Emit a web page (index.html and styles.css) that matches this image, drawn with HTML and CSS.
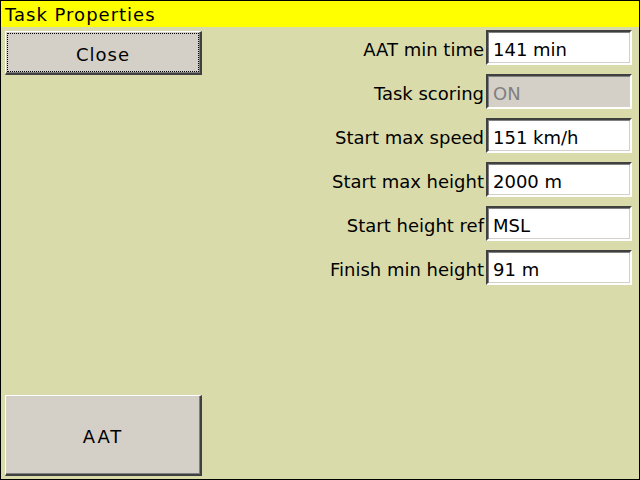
FILE: index.html
```html
<!DOCTYPE html>
<html>
<head>
<meta charset="utf-8">
<link rel="stylesheet" href="styles.css">
</head>
<body>
<div class="window">
  <div class="titlebar">Task Properties</div>
  <div class="content">
    <div class="buttons">
      <button class="btn btn-close"><span class="focus">Close</span></button>
      <button class="btn btn-aat">AAT</button>
    </div>
    <div class="form">
      <div class="row"><span class="label">AAT min time</span><span class="field">141 min</span></div>
      <div class="row"><span class="label">Task scoring</span><span class="field disabled">ON</span></div>
      <div class="row"><span class="label">Start max speed</span><span class="field">151 km/h</span></div>
      <div class="row"><span class="label">Start max height</span><span class="field">2000 m</span></div>
      <div class="row"><span class="label">Start height ref</span><span class="field">MSL</span></div>
      <div class="row"><span class="label">Finish min height</span><span class="field">91 m</span></div>
    </div>
  </div>
</div>
</body>
</html>
```

FILE: styles.css
```css
html, body {
  margin: 0;
  padding: 0;
}
body {
  width: 640px;
  height: 480px;
  overflow: hidden;
  font-family: "DejaVu Sans", sans-serif;
  font-size: 18px;
  color: #000;
}
.window {
  box-sizing: border-box;
  width: 640px;
  height: 480px;
  border: 1px solid #000;
  background: #dadbab;
  display: flex;
  flex-direction: column;
}
.titlebar {
  height: 26px;
  line-height: 27px;
  background: #ffff00;
  padding-left: 4px;
  letter-spacing: 1px;
  white-space: nowrap;
}
.content {
  flex: 1;
  display: flex;
  padding: 3px 7px 3px 4px;
}
.buttons {
  width: 197px;
  display: flex;
  flex-direction: column;
  justify-content: space-between;
  padding-top: 1px;
}
.btn {
  box-sizing: border-box;
  width: 197px;
  margin: 0;
  padding: 0;
  background: #d4d0c8;
  font-family: "DejaVu Sans", sans-serif;
  font-size: 18px;
  color: #000;
  border-style: solid;
  border-width: 1px 2px 2px 1px;
  border-color: #ffffff #404040 #404040 #ffffff;
  box-shadow: inset -1px -1px 0 #808080;
  display: flex;
  align-items: center;
  justify-content: center;
}
.btn-close {
  height: 44px;
  position: relative;
  letter-spacing: 1px;
}
.btn-close .focus {
  position: absolute;
  left: 1px;
  top: 1px;
  right: 1px;
  bottom: 1px;
  padding-top: 4px;
  border: 1px dotted #000;
  display: flex;
  align-items: center;
  justify-content: center;
}
.btn-aat {
  height: 81px;
  letter-spacing: 2px;
  padding-top: 2px;
}
.form {
  flex: 1;
  display: flex;
  flex-direction: column;
  gap: 9px;
}
.row {
  display: flex;
  justify-content: flex-end;
  align-items: center;
  height: 35px;
}
.label {
  margin-right: 2px;
  padding-top: 3px;
  white-space: nowrap;
}
.field {
  box-sizing: border-box;
  width: 146px;
  height: 35px;
  padding-left: 5px;
  padding-top: 2px;
  line-height: 31px;
  background: #fff;
  border-style: solid;
  border-width: 2px;
  border-color: #404040 #ffffff #ffffff #404040;
  box-shadow: inset 1px 1px 0 #808080, inset -1px -1px 0 #d4d0c8;
  white-space: nowrap;
}
.field.disabled {
  background: #d4d0c8;
  color: #808080;
}
```
